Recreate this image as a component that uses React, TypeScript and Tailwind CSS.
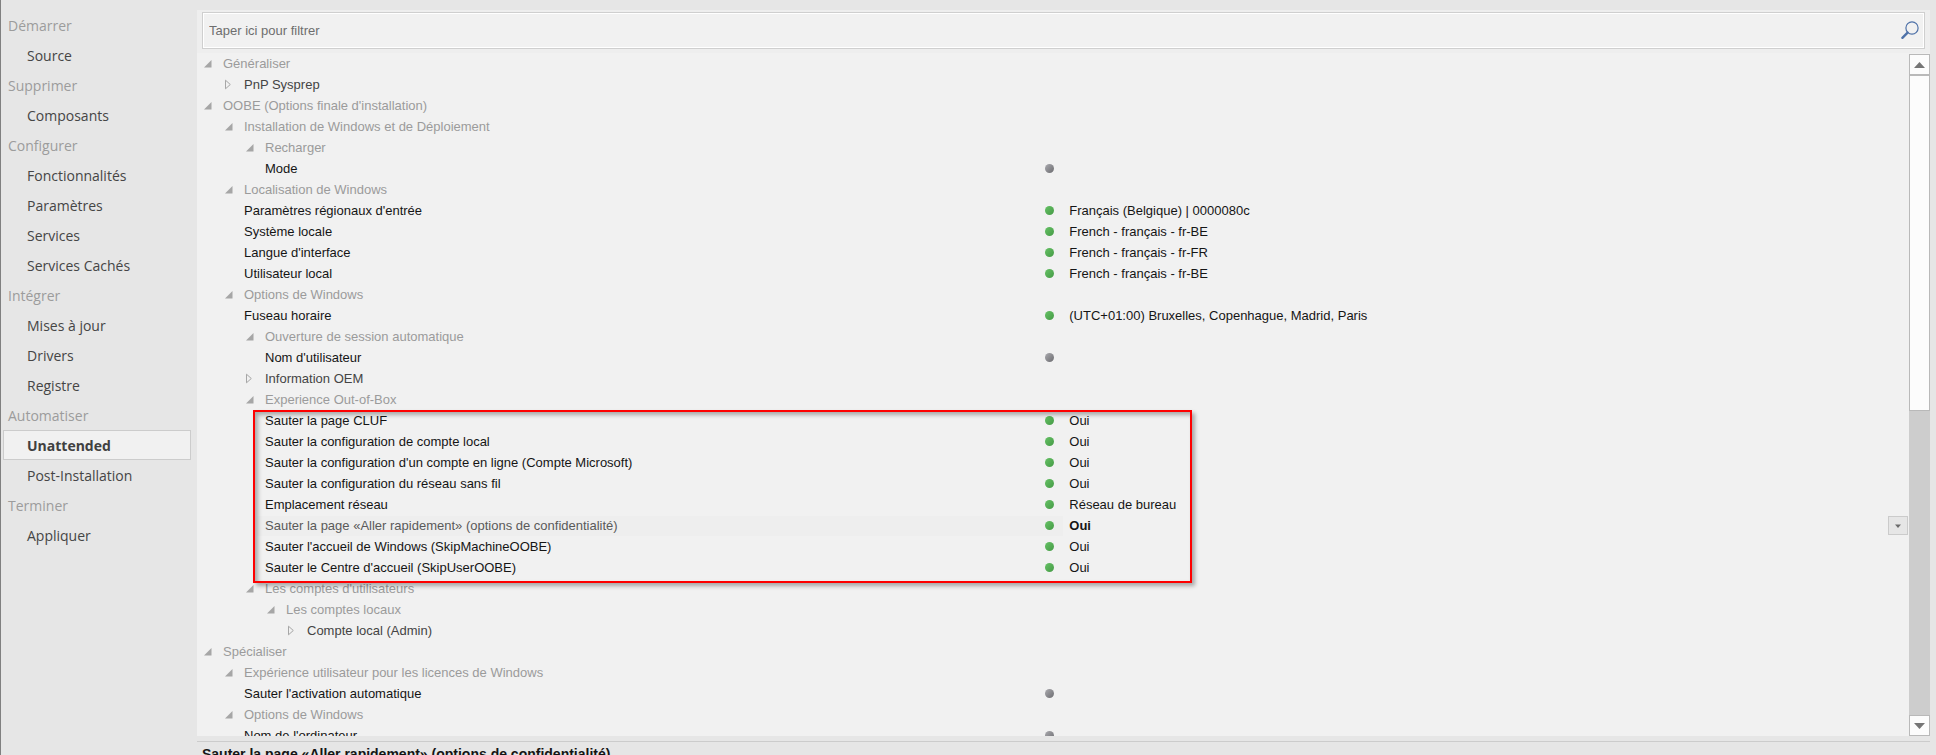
import React from "react";

type NavEntry = { label: string; heading?: boolean; active?: boolean };

const NAV: NavEntry[] = [
  { label: "Démarrer", heading: true },
  { label: "Source" },
  { label: "Supprimer", heading: true },
  { label: "Composants" },
  { label: "Configurer", heading: true },
  { label: "Fonctionnalités" },
  { label: "Paramètres" },
  { label: "Services" },
  { label: "Services Cachés" },
  { label: "Intégrer", heading: true },
  { label: "Mises à jour" },
  { label: "Drivers" },
  { label: "Registre" },
  { label: "Automatiser", heading: true },
  { label: "Unattended", active: true },
  { label: "Post-Installation" },
  { label: "Terminer", heading: true },
  { label: "Appliquer" },
];

type Kind = "open" | "closed" | "leaf";
type TreeRow = {
  kind: Kind;
  level: 0 | 1 | 2 | 3 | 4;
  label: string;
  dot?: "gray" | "green";
  value?: string;
  selected?: boolean;
};

const ROWS_BEFORE: TreeRow[] = [
  { kind: "open", level: 0, label: "Généraliser" },
  { kind: "closed", level: 1, label: "PnP Sysprep" },
  { kind: "open", level: 0, label: "OOBE (Options finale d'installation)" },
  { kind: "open", level: 1, label: "Installation de Windows et de Déploiement" },
  { kind: "open", level: 2, label: "Recharger" },
  { kind: "leaf", level: 2, label: "Mode", dot: "gray" },
  { kind: "open", level: 1, label: "Localisation de Windows" },
  { kind: "leaf", level: 1, label: "Paramètres régionaux d'entrée", dot: "green", value: "Français (Belgique) | 0000080c" },
  { kind: "leaf", level: 1, label: "Système locale", dot: "green", value: "French - français - fr-BE" },
  { kind: "leaf", level: 1, label: "Langue d'interface", dot: "green", value: "French - français - fr-FR" },
  { kind: "leaf", level: 1, label: "Utilisateur local", dot: "green", value: "French - français - fr-BE" },
  { kind: "open", level: 1, label: "Options de Windows" },
  { kind: "leaf", level: 1, label: "Fuseau horaire", dot: "green", value: "(UTC+01:00) Bruxelles, Copenhague, Madrid, Paris" },
  { kind: "open", level: 2, label: "Ouverture de session automatique" },
  { kind: "leaf", level: 2, label: "Nom d'utilisateur", dot: "gray" },
  { kind: "closed", level: 2, label: "Information OEM" },
  { kind: "open", level: 2, label: "Experience Out-of-Box" },
];

const ROWS_MARKED: TreeRow[] = [
  { kind: "leaf", level: 2, label: "Sauter la page CLUF", dot: "green", value: "Oui" },
  { kind: "leaf", level: 2, label: "Sauter la configuration de compte local", dot: "green", value: "Oui" },
  { kind: "leaf", level: 2, label: "Sauter la configuration d'un compte en ligne (Compte Microsoft)", dot: "green", value: "Oui" },
  { kind: "leaf", level: 2, label: "Sauter la configuration du réseau sans fil", dot: "green", value: "Oui" },
  { kind: "leaf", level: 2, label: "Emplacement réseau", dot: "green", value: "Réseau de bureau" },
  { kind: "leaf", level: 2, label: "Sauter la page «Aller rapidement» (options de confidentialité)", dot: "green", value: "Oui", selected: true },
  { kind: "leaf", level: 2, label: "Sauter l'accueil de Windows (SkipMachineOOBE)", dot: "green", value: "Oui" },
  { kind: "leaf", level: 2, label: "Sauter le Centre d'accueil (SkipUserOOBE)", dot: "green", value: "Oui" },
];

const ROWS_AFTER: TreeRow[] = [
  { kind: "open", level: 2, label: "Les comptes d'utilisateurs" },
  { kind: "open", level: 3, label: "Les comptes locaux" },
  { kind: "closed", level: 4, label: "Compte local (Admin)" },
  { kind: "open", level: 0, label: "Spécialiser" },
  { kind: "open", level: 1, label: "Expérience utilisateur pour les licences de Windows" },
  { kind: "leaf", level: 1, label: "Sauter l'activation automatique", dot: "gray" },
  { kind: "open", level: 1, label: "Options de Windows" },
  { kind: "leaf", level: 1, label: "Nom de l'ordinateur", dot: "gray" },
];

const INDENT = ["pl-[7px]", "pl-[28px]", "pl-[49px]", "pl-[70px]", "pl-[91px]"];

const TEXT_COLOR: Record<Kind, string> = {
  open: "text-[#9b9b9b]",
  closed: "text-[#444444]",
  leaf: "text-[#151515]",
};

function Dot({ color }: { color: "gray" | "green" }) {
  return (
    <span
      className={
        color === "green"
          ? "mr-[9px] size-[9px] shrink-0 rounded-full bg-linear-to-br from-[#66c266] to-[#459a45]"
          : "mr-[9px] size-[9px] shrink-0 rounded-full bg-linear-to-br from-[#ababb0] to-[#6c6c70]"
      }
    />
  );
}

function Toggle({ kind, label }: { kind: Kind; label: string }) {
  if (kind === "leaf") return <span className="w-[19px] shrink-0" />;
  return (
    <button type="button" aria-label={label} aria-expanded={kind === "open"} className="w-[19px] shrink-0">
      {kind === "open" ? (
        <svg width="8" height="8" viewBox="0 0 8 8" className="block">
          <path d="M7.5 0V7.5H0Z" fill="#a6a6a6" />
        </svg>
      ) : (
        <svg width="8" height="11" viewBox="0 0 8 11" className="block">
          <path d="M0.5 1.2V9.8L5.3 5.5Z" fill="none" stroke="#a6a6a6" strokeWidth="1" />
        </svg>
      )}
    </button>
  );
}

function Row({ row }: { row: TreeRow }) {
  return (
    <div role="row" className="flex h-[21px] items-center">
      <div role="gridcell" className={`flex h-full w-[50.6%] items-center ${INDENT[row.level]}`}>
        <Toggle kind={row.kind} label={row.label} />
        <div
          className={`-ml-2 flex h-5 min-w-0 flex-1 items-center pl-2 ${row.selected ? "bg-[#eeeeee]" : ""}`}
        >
          <span className={`flex-1 truncate ${row.selected ? "text-[#5a5a5a]" : TEXT_COLOR[row.kind]}`}>
            {row.label}
          </span>
          {row.dot && <Dot color={row.dot} />}
        </div>
      </div>
      <div role="gridcell" className="relative flex h-full flex-1 items-center pl-1.5 text-[#151515]">
        {row.selected ? (
          <>
            <select aria-label={row.label} className="h-full w-full appearance-none bg-transparent font-bold outline-none">
              <option>Oui</option>
              <option>Non</option>
            </select>
            <span className="pointer-events-none absolute right-px flex h-[19px] w-5 items-center justify-center border border-[#cbcbcb] bg-[#e6e6e6]">
              <svg width="6" height="4" viewBox="0 0 6 4">
                <path d="M0 0.5H6L3 4Z" fill="#6b6b6b" />
              </svg>
            </span>
          </>
        ) : (
          row.value
        )}
      </div>
    </div>
  );
}

function Sidebar() {
  return (
    <nav className="w-[197px] shrink-0 border-l border-[#808080] pt-[10px] font-['Open_Sans','Noto_Sans',sans-serif] text-[14px]">
      <ul>
        {NAV.map((entry) => (
          <li key={entry.label} className="h-[30px]">
            {entry.heading ? (
              <span className="flex h-full items-center pl-[7px] text-[#9c9c9c]">{entry.label}</span>
            ) : (
              <a
                href="#"
                className={
                  entry.active
                    ? "mr-[6px] ml-[2px] flex h-full items-center border border-[#cccccc] bg-[#f1f1f1] pl-[23px] font-bold text-[#404040]"
                    : "flex h-full items-center pl-[26px] text-[#454545]"
                }
              >
                {entry.label}
              </a>
            )}
          </li>
        ))}
      </ul>
    </nav>
  );
}

function Scrollbar() {
  return (
    <div className="mt-px flex w-[21px] shrink-0 flex-col bg-[#cdcdcd]">
      <button type="button" aria-label="Défiler vers le haut" className="flex h-[21px] shrink-0 items-center justify-center border border-[#b9b9b9] bg-[#fcfcfc]">
        <svg width="11" height="6" viewBox="0 0 11 6">
          <path d="M5.5 0L11 6H0Z" fill="#757575" />
        </svg>
      </button>
      <div className="flex-1">
        <div className="h-[52.5%] border border-[#b9b9b9] bg-[#fcfcfc]" />
      </div>
      <button type="button" aria-label="Défiler vers le bas" className="flex h-[21px] shrink-0 items-center justify-center border border-[#b9b9b9] bg-[#fcfcfc]">
        <svg width="11" height="6" viewBox="0 0 11 6">
          <path d="M0 0H11L5.5 6Z" fill="#757575" />
        </svg>
      </button>
    </div>
  );
}

export default function App() {
  return (
    <div className="flex h-screen overflow-hidden bg-[#e6e6e6] font-['Liberation_Sans',Arial,sans-serif] text-[13px]">
      <Sidebar />
      <main className="mr-[6px] flex min-w-0 flex-1 flex-col pt-[10px]">
        <div className="h-[43px] shrink-0 bg-[#eeeeee] pt-[2px] pr-[5px] pl-[5px]">
          <div className="flex h-[37px] items-center border border-[#cfcfcf] bg-[#f1f1f1] pr-1 pl-[6px] ring-1 ring-white ring-inset">
            <input
              type="text"
              aria-label="Taper ici pour filtrer"
              placeholder="Taper ici pour filtrer"
              className="h-full min-w-0 flex-1 bg-transparent outline-none placeholder:text-[#6e6e6e]"
            />
            <button type="button" aria-label="Rechercher">
              <svg width="20" height="20" viewBox="0 0 20 20" className="block" fill="none" stroke="#4f72a8">
                <circle cx="12" cy="7" r="6.1" strokeWidth="1.2" />
                <path d="M7.6 11.6L2.4 16.8" strokeWidth="2.4" strokeLinecap="round" />
              </svg>
            </button>
          </div>
        </div>
        <div className="flex min-h-0 flex-1 bg-[#f1f1f1]">
          <div role="treegrid" aria-label="Options" className="min-w-0 flex-1 overflow-hidden">
            {ROWS_BEFORE.map((row, i) => (
              <Row key={i} row={row} />
            ))}
            <div className="relative">
              {ROWS_MARKED.map((row, i) => (
                <Row key={i} row={row} />
              ))}
              <div className="pointer-events-none absolute top-0 right-[41.9%] -bottom-[5px] left-14 border-2 border-[#fe0000] shadow-[3px_3px_4px_rgba(0,0,0,0.3),inset_3px_3px_4px_rgba(0,0,0,0.3)]" />
            </div>
            {ROWS_AFTER.map((row, i) => (
              <Row key={i} row={row} />
            ))}
          </div>
          <Scrollbar />
        </div>
        <div className="h-[19px] shrink-0 overflow-hidden pt-[5px]">
          <h2 className="border-t border-[#cccccc] pt-[2px] pl-[5px] text-[14px] font-bold text-[#151515]">
            Sauter la page «Aller rapidement» (options de confidentialité)
          </h2>
        </div>
      </main>
    </div>
  );
}
